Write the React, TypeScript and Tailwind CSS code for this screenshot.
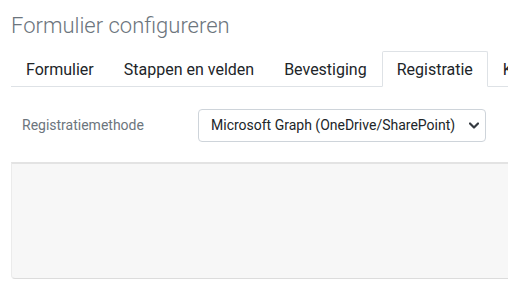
import React from "react";

const tabs = ["Formulier", "Stappen en velden", "Bevestiging", "Registratie", "Koppelingen"];

export default function App() {
  return (
    <div className="w-[508px] h-[301px] overflow-hidden bg-white font-['Roboto','Liberation_Sans',sans-serif]">
      <div className="pl-[11px]">
        <h1 className="pt-[13px] text-[22px] leading-[26px] font-light text-[#6c757d] whitespace-nowrap">
          Formulier configureren
        </h1>
        <div className="mt-[12px] flex w-[700px] border-b border-[#dee2e6] whitespace-nowrap">
          {tabs.map((t) => {
            const active = t === "Registratie";
            return (
              <div
                key={t}
                className={
                  active
                    ? "-mb-px px-[14px] pt-[6px] pb-[4px] text-[16px] leading-[24px] text-[#212529] bg-white border border-[#dee2e6] border-b-white rounded-t-[2px]"
                    : "-mb-px px-[14px] pt-[6px] pb-[4px] text-[16px] leading-[24px] text-[#212529] border border-transparent"
                }
              >
                {t}
              </div>
            );
          })}
        </div>
        <div className="mt-[22px] flex items-center pl-[11px]">
          <div className="w-[176px] text-[14px] text-[#6c757d] whitespace-nowrap">Registratiemethode</div>
          <div className="w-[288px] h-[33px] flex items-center justify-between pl-[12px] pr-[6px] border border-[#ced4da] rounded-[4px] bg-white">
            <span className="text-[14px] text-[#212529] whitespace-nowrap">Microsoft Graph (OneDrive/SharePoint)</span>
            <svg width="10" height="7" viewBox="0 0 10 7" fill="none">
              <path d="M1 1.5 L5 5.5 L9 1.5" stroke="#343a40" strokeWidth="2.2" strokeLinecap="round" strokeLinejoin="round" />
            </svg>
          </div>
        </div>
        <div className="mt-[20px] w-[520px] h-[117px] bg-[#f7f7f7] border-t-2 border-t-[#e3e3e3] border-l border-l-[#ebebeb] border-b border-b-[#dcdcdc] rounded-bl-[4px]" />
      </div>
    </div>
  );
}
